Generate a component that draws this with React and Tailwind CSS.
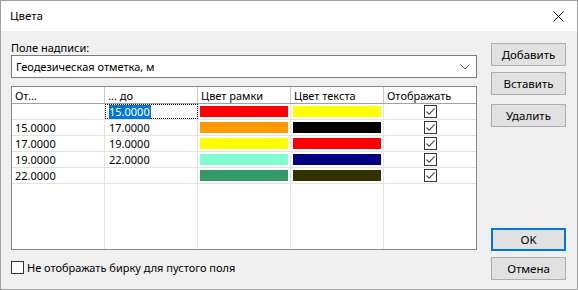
import { useState } from "react";

const rows = [
  { from: "", to: "15.0000", frame: "#ff0000", text: "#ffff00", selected: true },
  { from: "15.0000", to: "17.0000", frame: "#ff9900", text: "#000000" },
  { from: "17.0000", to: "19.0000", frame: "#ffff00", text: "#ff0000" },
  { from: "19.0000", to: "22.0000", frame: "#80ffd0", text: "#000080" },
  { from: "22.0000", to: "", frame: "#339966", text: "#333300" },
];

const CheckBox = ({ checked }) => (
  <div className="w-[13px] h-[13px] border border-[#333] bg-white flex items-center justify-center">
    {checked && (
      <svg width="11" height="11" viewBox="0 0 11 11">
        <path d="M1.5 5.5 L4.2 8.2 L9.5 2.5" fill="none" stroke="#555" strokeWidth="1.2" />
      </svg>
    )}
  </div>
);

const Button = ({ children, primary, className = "" }) => (
  <button
    className={`w-[75px] h-[23px] bg-[#e1e1e1] text-[11.5px] text-black flex items-center justify-center ${
      primary ? "border-2 border-[#0078d7]" : "border border-[#adadad]"
    } ${className}`}
  >
    {children}
  </button>
);

const App = () => {
  const [hideEmpty, setHideEmpty] = useState(false);

  return (
    <div className="w-[578px] h-[290px] border border-[#a0a0a0] bg-[#f0f0f0] flex flex-col font-['Noto_Sans',sans-serif] text-[11px] text-black leading-none">
      <div className="h-[30px] bg-white flex items-center justify-between pl-[9px] pr-[13px] shrink-0">
        <span className="text-[11.5px]">Цвета</span>
        <svg width="11" height="11" viewBox="0 0 11 11">
          <path d="M0.5 0.5 L10.5 10.5 M10.5 0.5 L0.5 10.5" stroke="#000" strokeWidth="1" />
        </svg>
      </div>

      <div className="flex flex-1">
        <div className="ml-[10px] w-[466px] flex flex-col">
          <div className="mt-[8px] h-[16px] flex items-center">Поле надписи:</div>
          <div className="h-[23px] bg-white border border-[#7a7a7a] flex items-center justify-between pl-[4px] pr-[6px]">
            <span>Геодезическая отметка, м</span>
            <svg width="10" height="6" viewBox="0 0 10 6">
              <path d="M0.5 0.5 L5 5 L9.5 0.5" fill="none" stroke="#606060" strokeWidth="1" />
            </svg>
          </div>

          <div className="mt-[8px] h-[164px] bg-white border border-[#828790] flex flex-col">
            <div className="flex h-[17px] border-b border-[#a0a0a0] shrink-0">
              {["От...", "... до", "Цвет рамки", "Цвет текста", "Отображать"].map((h, i) => (
                <div
                  key={h}
                  className={`h-full flex items-center pl-[3px] ${
                    i < 4 ? "w-[93px] border-r border-[#c8c8c8]" : "w-[92px]"
                  }`}
                >
                  {h}
                </div>
              ))}
            </div>
            {rows.map((r, idx) => (
              <div key={idx} className="flex h-[16px] border-b border-[#e3e3e3] shrink-0">
                <div className="w-[93px] border-r border-[#e3e3e3] flex items-center pl-[3px]">{r.from}</div>
                <div
                  className={`w-[93px] border-r flex items-center pl-[3px] ${
                    r.selected ? "border border-dotted border-black" : "border-[#e3e3e3]"
                  }`}
                >
                  {r.selected ? (
                    <span className="bg-[#0078d7] text-white h-[14px] flex items-center pr-[1px]">{r.to}</span>
                  ) : (
                    <span className="pl-[1px]">{r.to}</span>
                  )}
                </div>
                <div className="w-[93px] border-r border-[#e3e3e3] p-[2px]">
                  <div className="w-full h-full" style={{ backgroundColor: r.frame }} />
                </div>
                <div className="w-[93px] border-r border-[#e3e3e3] p-[2px]">
                  <div className="w-full h-full" style={{ backgroundColor: r.text }} />
                </div>
                <div className="w-[92px] flex items-center justify-center">
                  <CheckBox checked />
                </div>
              </div>
            ))}
            <div className="flex flex-1">
              <div className="w-[93px] border-r border-[#e3e3e3]" />
              <div className="w-[93px] border-r border-[#e3e3e3]" />
              <div className="w-[93px] border-r border-[#e3e3e3]" />
              <div className="w-[93px] border-r border-[#e3e3e3]" />
              <div className="w-[92px]" />
            </div>
          </div>

          <label
            className="mt-[11px] flex items-center gap-[3px] cursor-default"
            onClick={() => setHideEmpty(!hideEmpty)}
          >
            <CheckBox checked={hideEmpty} />
            <span>Не отображать бирку для пустого поля</span>
          </label>
        </div>

        <div className="ml-[14px] flex flex-col">
          <Button className="mt-[12px]">Добавить</Button>
          <Button className="mt-[6px]">Вставить</Button>
          <Button className="mt-[9px]">Удалить</Button>
          <Button primary className="mt-[101px]">OK</Button>
          <Button className="mt-[6px]">Отмена</Button>
        </div>
      </div>
    </div>
  );
};

export default App;
